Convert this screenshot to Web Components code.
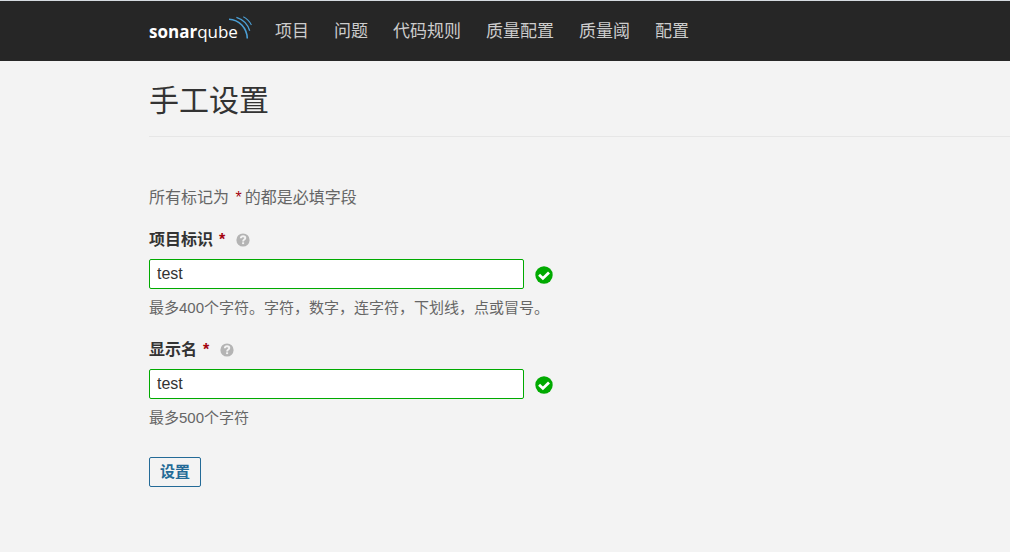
<!DOCTYPE html>
<html lang="zh-CN">
<head>
<meta charset="utf-8">
<meta name="viewport" content="width=device-width, initial-scale=1">
<title>手工设置</title>
<style>
  :root { --gutter: 149px; --muted: #666; --ok: #0a0; --link: #236a97; }
  body { margin: 0; background: #f3f3f3; color: #333; font: 16px/24px "Liberation Sans", "Noto Sans CJK SC", sans-serif; }
</style>
</head>
<body>
<sq-navbar>
  <sq-nav-link href="#projects">项目</sq-nav-link>
  <sq-nav-link href="#issues">问题</sq-nav-link>
  <sq-nav-link href="#rules">代码规则</sq-nav-link>
  <sq-nav-link href="#profiles">质量配置</sq-nav-link>
  <sq-nav-link href="#gates">质量阈</sq-nav-link>
  <sq-nav-link href="#settings">配置</sq-nav-link>
</sq-navbar>
<sq-page heading="手工设置">
  <sq-setup-form>
    <sq-field label="项目标识" name="key" value="test">最多400个字符。字符，数字，连字符，下划线，点或冒号。</sq-field>
    <sq-field label="显示名" name="name" value="test">最多500个字符</sq-field>
  </sq-setup-form>
</sq-page>
<script>
const define = (name, markup, setup) => customElements.define(name, class extends HTMLElement {
  constructor() {
    super();
    const template = document.createElement('template');
    template.innerHTML = markup;
    this.attachShadow({ mode: 'open' }).append(template.content.cloneNode(true));
  }
  connectedCallback() { if (setup) setup(this, this.shadowRoot); }
});

define('sq-logo', `
  <style>
    :host { display: block; }
    a { display: flex; color: #fff; text-decoration: none; font: 17px/24px "Open Sans", sans-serif; }
    b { font-weight: 700; }
    .name { padding-top: 4px; }
    svg { display: block; width: 24px; height: 24px; margin-left: -10px; }
  </style>
  <a href="#home"><span class="name"><b>sonar</b>qube</span>
    <svg viewBox="0 0 24 24" fill="none" stroke="#4b9fd5" aria-hidden="true">
      <path stroke-width="1.6" d="M1 3.2C11 3.6 19 12 19.3 22.6"/>
      <path stroke-width="1.3" d="M8.4 1.3C15 3.4 20 8.8 21.7 14.8"/>
      <path stroke-width="1.1" d="M15.3 .8C19 2.8 21.8 5.6 23.4 9"/>
    </svg></a>`);

define('sq-nav-link', `
  <style>
    :host { display: block; }
    a { color: #ccc; font-size: 17px; line-height: 24px; text-decoration: none; }
  </style>
  <a><slot></slot></a>`, (host, root) => {
    root.querySelector('a').href = host.getAttribute('href');
  });

define('sq-navbar', `
  <style>
    :host { display: block; background: #262626; border-top: 1px solid #d5dae0; }
    nav { display: flex; flex-wrap: wrap; align-items: flex-end; box-sizing: border-box; min-height: 60px;
      padding: 14px 0 17px var(--gutter); column-gap: 25px; }
    sq-logo { margin-right: -2px; }
  </style>
  <nav><sq-logo></sq-logo><slot></slot></nav>`);

define('sq-page', `
  <style>
    :host { display: block; padding: 20px 0 64px var(--gutter); }
    header { padding-bottom: 15px; border-bottom: 1px solid #e6e6e6; }
    h1 { margin: 0; font-size: 30px; line-height: 40px; font-weight: 400; }
    main { padding-top: 49px; }
  </style>
  <header><h1></h1></header>
  <main><slot></slot></main>`, (host, root) => {
    root.querySelector('h1').textContent = host.getAttribute('heading');
  });

define('sq-help-icon', `
  <style>:host { display: block; } svg { display: block; width: 14px; height: 14px; }</style>
  <svg viewBox="0 0 14 14" aria-hidden="true"><circle cx="7" cy="7" r="6.6" fill="#b4b4b4"/>
    <path d="M4.8 5.3C4.9 3.9 5.8 3.2 7 3.200c1.300 0 2.300.8 2.300 1.900 0 1.500-2.200 1.500-2.200 3.300" fill="none" stroke="#f3f3f3" stroke-width="1.900"/>
    <rect x="6.1" y="9.3" width="2" height="1.8" fill="#f3f3f3"/></svg>`);

define('sq-check-icon', `
  <style>:host { display: block; } svg { display: block; width: 18px; height: 18px; }</style>
  <svg viewBox="0 0 18 18" aria-hidden="true"><circle cx="9" cy="9" r="8.700" fill="#0a0"/>
    <path d="M4.100 8.700L7.900 12.400L14 6.400" fill="none" stroke="#fff" stroke-width="2.800"/></svg>`);

define('sq-field', `
  <style>
    :host { display: block; }
    .caption { display: flex; align-items: center; gap: 11px; }
    label { font-weight: 700; }
    em { margin-left: 6px; color: #a4030f; font-style: normal; }
    .control { display: flex; align-items: center; gap: 11px; margin-top: 7px; }
    input { box-sizing: border-box; width: 375px; max-width: 80%; height: 30px; margin: 0; padding: 0 7px;
      border: 1px solid var(--ok); border-radius: 2px; background: #fff; color: #333; font: inherit; outline: 0; }
    sq-check-icon { padding-top: 2px; }
    p { margin: 7px 0 0; color: var(--muted); font-size: 15px; line-height: 24px; }
  </style>
  <div class="caption"><label for="field"><span></span><em>*</em></label><sq-help-icon></sq-help-icon></div>
  <div class="control"><input id="field" type="text" required><sq-check-icon></sq-check-icon></div>
  <p><slot></slot></p>`, (host, root) => {
    root.querySelector('label span').textContent = host.getAttribute('label');
    const input = root.querySelector('input');
    input.name = host.getAttribute('name');
    input.value = host.getAttribute('value');
  });

define('sq-setup-form', `
  <style>
    :host { display: block; }
    form { display: grid; gap: 18px; justify-items: start; }
    .note { margin: 0; color: var(--muted); }
    em { margin: 0 3px 0 2px; color: #a4030f; font-style: normal; }
    ::slotted(*) { justify-self: stretch; }
    button { margin-top: 9px; height: 30px; padding: 0 10px; border: 1px solid var(--link); border-radius: 2px;
      background: transparent; color: var(--link); font: inherit; font-size: 15px; font-weight: 700; }
  </style>
  <form>
    <p class="note">所有标记为 <em>*</em>的都是必填字段</p>
    <slot></slot>
    <button type="button">设置</button>
  </form>`);
</script>
</body>
</html>
